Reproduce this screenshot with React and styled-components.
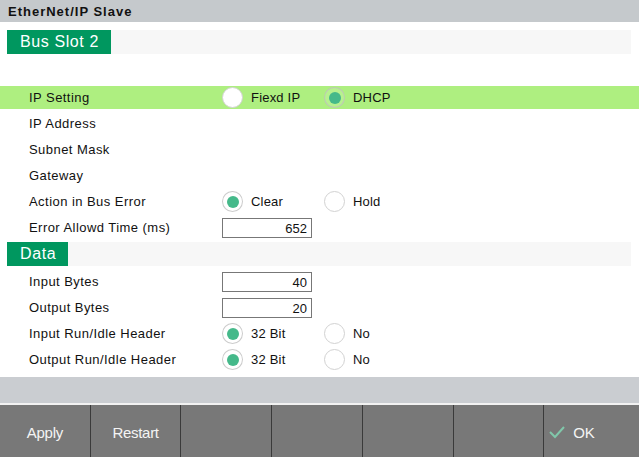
import React from "react"
import styled, { createGlobalStyle } from "styled-components"

const GlobalStyle = createGlobalStyle`
  html, body {
    margin: 0;
    padding: 0;
    background: #fff;
  }
  body {
    font-family: "Liberation Sans", Arial, sans-serif;
    color: #111;
  }
`

const Screen = styled.div`
  width: 639px;
  height: 457px;
  display: flex;
  flex-direction: column;
  overflow: hidden;
`

const TitleBar = styled.div`
  height: 22px;
  background: #c5c9cc;
  display: flex;
  align-items: center;
  padding-left: 8px;
  font-size: 13px;
  font-weight: 700;
  letter-spacing: 1px;
  margin-bottom: 8px;
`

const SectionBand = styled.div`
  height: 24px;
  margin: 0 8px 0 7px;
  background: #f7f7f7;
  display: flex;
  margin-bottom: ${(p) => p.$after}px;
`

const SectionTag = styled.div`
  background: #00975f;
  color: #fff;
  font-size: 16px;
  letter-spacing: 0.6px;
  padding: 0 12px 0 13px;
  display: flex;
  align-items: center;
`

const Rows = styled.div`
  display: flex;
  flex-direction: column;
  gap: 3px;
  margin-bottom: ${(p) => p.$after}px;
`

const Row = styled.div`
  height: 23px;
  display: grid;
  grid-template-columns: 222px 1fr;
  align-items: center;
  background: ${(p) => (p.$active ? "#aeef80" : "transparent")};
`

const Label = styled.div`
  padding-left: 29px;
  font-size: 13px;
  letter-spacing: 0.45px;
`

const Controls = styled.div`
  display: flex;
  align-items: center;
`

const Option = styled.div`
  width: 102px;
  display: flex;
  align-items: center;
  gap: 8px;
  font-size: 13px;
  letter-spacing: 0.2px;
`

const Circle = styled.div`
  width: 19px;
  height: 19px;
  border-radius: 50%;
  border: 1px solid ${(p) => (p.$on ? "rgba(190, 190, 190, 0.8)" : "#d2d2d2")};
  background: ${(p) => (p.$on ? "rgba(255, 255, 255, 0.12)" : "#fff")};
  display: flex;
  align-items: center;
  justify-content: center;

  &::after {
    content: "";
    width: 12px;
    height: 12px;
    border-radius: 50%;
    background: #45b98a;
    display: ${(p) => (p.$on ? "block" : "none")};
  }
`

const NumBox = styled.div`
  width: 84px;
  height: 18px;
  border: 1px solid #777;
  background: #fff;
  font-size: 13px;
  display: flex;
  align-items: center;
  justify-content: flex-end;
  padding-right: 4px;
  box-sizing: content-box;
  margin-top: 1px;
`

const StatusBand = styled.div`
  height: 26px;
  background: #cacdd1;
  border-bottom: 2px solid #f2f2f2;
`

const ButtonBar = styled.div`
  height: 52px;
  display: flex;
  background: #787878;
`

const Button = styled.div`
  flex: 1;
  display: flex;
  align-items: center;
  justify-content: ${(p) => (p.$left ? "flex-start" : "center")};
  padding-left: ${(p) => (p.$left ? "5px" : "0")};
  padding-top: 3px;
  gap: 8px;
  color: #f4f4f4;
  font-size: 15px;
  letter-spacing: -0.3px;
  border-right: 1px solid #3a3a3a;

  &:last-child {
    border-right: none;
  }
`

function Radio({ on, children }) {
  return (
    <Option>
      <Circle $on={on} />
      {children}
    </Option>
  )
}

function Check() {
  return (
    <svg width="16" height="14" viewBox="0 0 16 14">
      <polyline points="1,6 6,11 15,1" fill="none" stroke="#80c7aa" strokeWidth="2" />
    </svg>
  )
}

export default function App() {
  return (
    <Screen>
      <GlobalStyle />
      <TitleBar>EtherNet/IP Slave</TitleBar>

      <SectionBand $after={32}>
        <SectionTag>Bus Slot 2</SectionTag>
      </SectionBand>

      <Rows $after={3}>
        <Row $active>
          <Label>IP Setting</Label>
          <Controls>
            <Radio>Fiexd IP</Radio>
            <Radio on>DHCP</Radio>
          </Controls>
        </Row>
        <Row>
          <Label>IP Address</Label>
        </Row>
        <Row>
          <Label>Subnet Mask</Label>
        </Row>
        <Row>
          <Label>Gateway</Label>
        </Row>
        <Row>
          <Label>Action in Bus Error</Label>
          <Controls>
            <Radio on>Clear</Radio>
            <Radio>Hold</Radio>
          </Controls>
        </Row>
        <Row>
          <Label>Error Allowd Time (ms)</Label>
          <Controls>
            <NumBox>652</NumBox>
          </Controls>
        </Row>
      </Rows>

      <SectionBand $after={4}>
        <SectionTag>Data</SectionTag>
      </SectionBand>

      <Rows $after={6}>
        <Row>
          <Label>Input Bytes</Label>
          <Controls>
            <NumBox>40</NumBox>
          </Controls>
        </Row>
        <Row>
          <Label>Output Bytes</Label>
          <Controls>
            <NumBox>20</NumBox>
          </Controls>
        </Row>
        <Row>
          <Label>Input Run/Idle Header</Label>
          <Controls>
            <Radio on>32 Bit</Radio>
            <Radio>No</Radio>
          </Controls>
        </Row>
        <Row>
          <Label>Output Run/Idle Header</Label>
          <Controls>
            <Radio on>32 Bit</Radio>
            <Radio>No</Radio>
          </Controls>
        </Row>
      </Rows>

      <StatusBand />

      <ButtonBar>
        <Button>Apply</Button>
        <Button>Restart</Button>
        <Button />
        <Button />
        <Button />
        <Button />
        <Button $left>
          <Check />
          OK
        </Button>
      </ButtonBar>
    </Screen>
  )
}
